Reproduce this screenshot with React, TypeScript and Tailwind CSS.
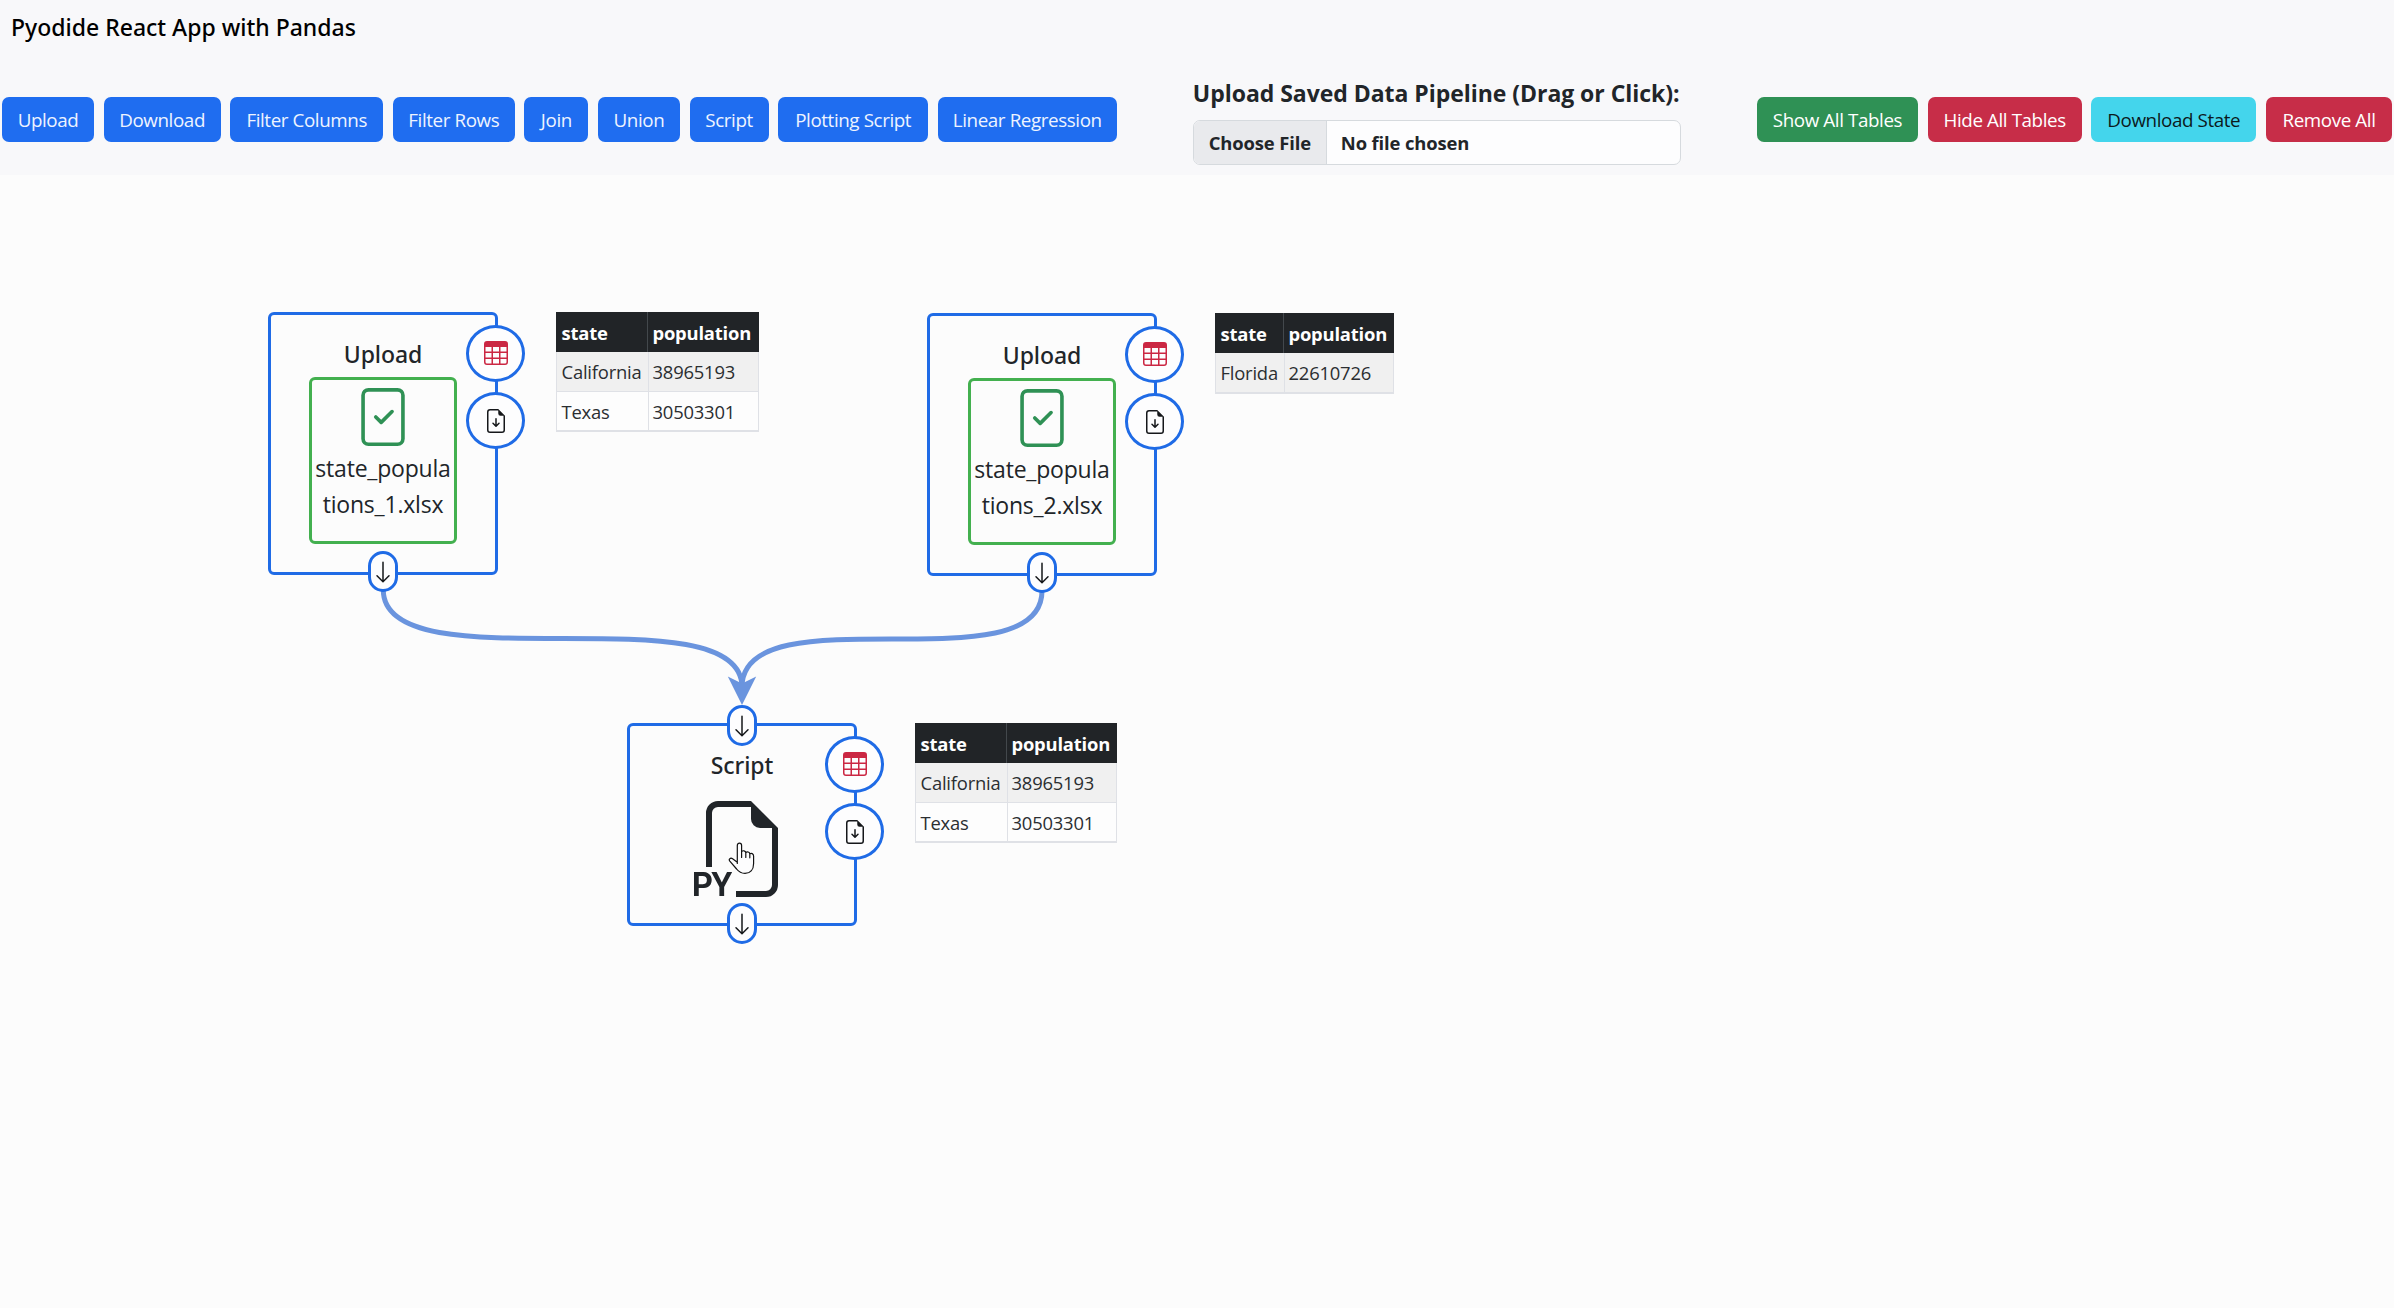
import React from "react";
import {
  BsArrowDown,
  BsFileCheck,
  BsFileEarmarkArrowDown,
  BsFiletypePy,
  BsTable,
} from "react-icons/bs";

const steps = [
  { label: "Upload", width: "w-[92px]" },
  { label: "Download", width: "w-[117px]" },
  { label: "Filter Columns", width: "w-[153px]" },
  { label: "Filter Rows", width: "w-[122px]" },
  { label: "Join", width: "w-[64px]" },
  { label: "Union", width: "w-[82px]" },
  { label: "Script", width: "w-[79px]" },
  { label: "Plotting Script", width: "w-[150px]" },
  { label: "Linear Regression", width: "w-[179px]" },
];

const actions = [
  { label: "Show All Tables", style: "w-[161px] bg-[#2f9155] text-white" },
  { label: "Hide All Tables", style: "w-[154px] bg-[#c72d48] text-white" },
  { label: "Download State", style: "w-[165px] bg-[#44d5ec] text-[#0c1a1c]" },
  { label: "Remove All", style: "w-[126px] bg-[#c72d48] text-white" },
];

function ToolButton({ label, className }: { label: string; className: string }) {
  return (
    <button
      className={`flex h-[45px] shrink-0 items-center justify-center rounded-[7px] pt-px text-[18.8px] tracking-[-0.4px] whitespace-nowrap ${className}`}
    >
      {label}
    </button>
  );
}

function Handle({ className }: { className: string }) {
  return (
    <div
      className={`absolute left-1/2 flex h-[41px] w-[30px] -translate-x-1/2 items-center justify-center rounded-[15px] border-[3px] border-[#1f6be6] bg-[#fdfdfe] text-[#15171a] ${className}`}
    >
      <BsArrowDown className="size-[24px]" />
    </div>
  );
}

function SideButtons() {
  return (
    <div className="absolute top-[10px] -right-[30px] flex flex-col gap-[10.5px]">
      <div className="flex h-[56.5px] w-[59px] items-center justify-center rounded-[50%] border-[3px] border-[#1f6be6] bg-[#fdfdfe] text-[#cb2743]">
        <BsTable className="size-[24px]" />
      </div>
      <div className="flex h-[56.5px] w-[59px] items-center justify-center rounded-[50%] border-[3px] border-[#1f6be6] bg-[#fdfdfe] pt-[2px] text-[#15171a]">
        <BsFileEarmarkArrowDown className="size-[24px]" />
      </div>
    </div>
  );
}

function UploadNode({ file, className }: { file: [string, string]; className: string }) {
  return (
    <div
      className={`absolute flex h-[263px] w-[230px] flex-col items-center rounded-[6px] border-[3px] border-[#1f6be6] ${className}`}
    >
      <h5 className="mt-[25px] text-[23px] leading-[29px] font-medium tracking-[-0.1px]">Upload</h5>
      <div className="mt-[8px] flex h-[167px] w-[148px] flex-col items-center rounded-[6px] border-[3px] border-[#43b04f] pt-[8px]">
        <BsFileCheck className="size-[58px] text-[#2f9155]" />
        <p className="mt-[4px] text-center font-['Open_Sans',sans-serif] text-[23px] leading-[36px] tracking-[-0.2px]">
          {file[0]}
          <br />
          {file[1]}
        </p>
      </div>
      <SideButtons />
      <Handle className="-bottom-[20px]" />
    </div>
  );
}

function ScriptNode({ className }: { className: string }) {
  return (
    <div
      className={`absolute flex h-[203px] w-[230px] flex-col items-center rounded-[6px] border-[3px] border-[#1f6be6] ${className}`}
    >
      <Handle className="-top-[21px]" />
      <h5 className="mt-[25px] text-[23px] leading-[29px] font-medium tracking-[-0.1px]">Script</h5>
      <BsFiletypePy className="mt-[21px] size-[96px] text-[#212529]" />
      <SideButtons />
      <Handle className="-bottom-[21px]" />
    </div>
  );
}

function DataTable({
  rows,
  cols,
  className,
}: {
  rows: [string, string][];
  cols: string;
  className: string;
}) {
  return (
    <div
      className={`absolute border border-[#dfe1e6] text-[18.4px] tracking-[-0.2px] ${className}`}
    >
      <div className={`-mx-px -mt-px grid h-[40px] bg-[#212427] font-bold tracking-[-0.2px] text-white ${cols}`}>
        <div className="flex items-center border-r border-[#43484c] pt-[2px] pl-[5.5px]">state</div>
        <div className="flex items-center pt-[2px] pl-[4.5px]">population</div>
      </div>
      {rows.map(([state, population], i) => (
        <div
          key={state}
          className={`-mx-px grid h-[39.5px] border-x border-b border-[#dfe1e6] text-[#2b2e31] ${cols} ${i % 2 === 0 ? "bg-[#f0f0f0]" : "bg-[#fdfdfd]"}`}
        >
          <div className="flex items-center border-r border-[#dfe1e6] pt-[2px] pl-[4.5px]">{state}</div>
          <div className="flex items-center pt-[2px] pl-[3.5px]">{population}</div>
        </div>
      ))}
    </div>
  );
}

function Edges() {
  return (
    <svg
      className="absolute top-0 left-0 h-[1133px] w-[2394px]"
      viewBox="0 175 2394 1133"
      fill="none"
    >
      <g stroke="#6a94de" strokeWidth="5">
        <path d="M383.3 590 C383.3 687 742 590 742 687" />
        <path d="M1042 591 C1042 687 742 591 742 687" />
      </g>
      <path d="M742 705 L727.8 676.5 L742 683.5 L756.2 676.5 Z" fill="#6a94de" />
    </svg>
  );
}

function HandCursor() {
  return (
    <svg className="absolute top-[667px] left-[728px] h-[33px] w-[27px]" viewBox="0 0 27 33" fill="none">
      <path
        d="M9.3 21.5 V3.6 C9.3 0.2 13.6 0.2 13.6 3.6 V9.8 C14.6 8.2 17.6 8.5 17.8 10.6 C19 9.3 21.6 9.8 21.8 11.8 C23.2 10.8 25.6 11.6 25.6 14 V21.5 C25.6 28 22 31.4 17 31.4 C12.5 31.4 10.6 29.6 8.6 27 L1.8 19.2 C0.2 17 2.6 15.4 4.6 16.8 L9.3 20.2 M13.6 9.5 V15.5 M17.8 10.5 V15.5 M21.8 11.8 V15.8"
        fill="#fdfdfe"
        stroke="#111111"
        strokeWidth="1.2"
        strokeLinejoin="round"
        strokeLinecap="round"
      />
    </svg>
  );
}

export default function App() {
  return (
    <div className="flex h-[1308px] w-[2394px] flex-col overflow-hidden bg-[#fcfcfc] font-['Noto_Sans',sans-serif] text-[#212529]">
      <header className="h-[175px] shrink-0 bg-[#f8f8fa]">
        <h1 className="h-[54px] pl-[11px] text-[23px] leading-[54px] font-medium text-black">
          Pyodide React App with Pandas
        </h1>
        <div className="flex items-start justify-between px-[2px] pt-[20px] font-['Open_Sans',sans-serif]">
          <div className="mt-[23px] flex gap-[9.6px]">
            {steps.map((s) => (
              <ToolButton key={s.label} label={s.label} className={`bg-[#1f6df0] text-[#eef4ff] ${s.width}`} />
            ))}
          </div>
          <div className="flex w-[488px] flex-col">
            <label className="text-[23px] leading-[39px] font-bold tracking-[-0.04px] whitespace-nowrap">
              Upload Saved Data Pipeline (Drag or Click):
            </label>
            <div className="mt-[7px] flex h-[45px] overflow-hidden rounded-[7px] border border-[#d6dade] bg-[#fdfdfe] text-[18.4px] font-bold tracking-[-0.12px]">
              <span className="flex w-[133px] items-center justify-center border-r border-[#d6dade] bg-[#e9eaed] pt-px">
                Choose File
              </span>
              <span className="flex items-center pt-px pl-[14px]">No file chosen</span>
            </div>
          </div>
          <div className="mt-[23px] flex gap-[9.7px]">
            {actions.map((a) => (
              <ToolButton key={a.label} label={a.label} className={a.style} />
            ))}
          </div>
        </div>
      </header>

      <main className="relative grow">
        <Edges />
        <UploadNode file={["state_popula", "tions_1.xlsx"]} className="top-[137px] left-[268px]" />
        <UploadNode file={["state_popula", "tions_2.xlsx"]} className="top-[138px] left-[927px]" />
        <ScriptNode className="top-[548px] left-[627px]" />
        <div className="font-['Open_Sans',sans-serif]">
          <DataTable
            className="top-[137px] left-[556px] w-[203px]"
            cols="grid-cols-[92px_1fr]"
            rows={[
              ["California", "38965193"],
              ["Texas", "30503301"],
            ]}
          />
          <DataTable
            className="top-[138px] left-[1215px] w-[179px]"
            cols="grid-cols-[69px_1fr]"
            rows={[["Florida", "22610726"]]}
          />
          <DataTable
            className="top-[548px] left-[915px] w-[202px]"
            cols="grid-cols-[92px_1fr]"
            rows={[
              ["California", "38965193"],
              ["Texas", "30503301"],
            ]}
          />
        </div>
        <HandCursor />
      </main>
    </div>
  );
}
